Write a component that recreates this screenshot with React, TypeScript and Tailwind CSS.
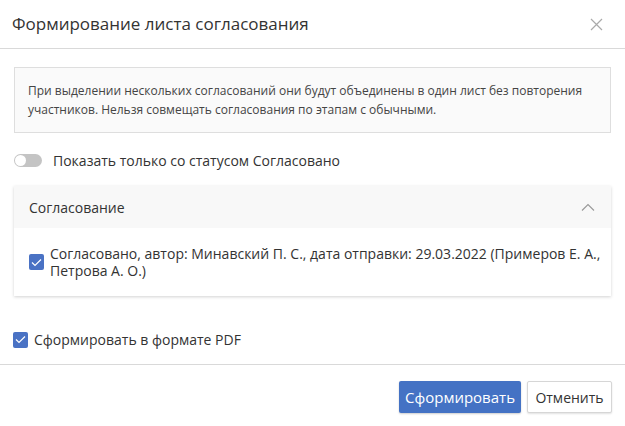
import React from "react";

export default function App() {
  return (
    <div className="w-[625px] h-[426px] bg-white text-[#333] flex flex-col" style={{ fontFamily: '"Open Sans", sans-serif' }}>
      <div className="h-[49px] flex items-center justify-between pl-[12px] pr-[22px] border-b border-[#d9d9d9]">
        <div className="text-[17px] text-[#333]">Формирование листа согласования</div>
        <svg width="13" height="13" viewBox="0 0 13 13" className="text-[#aaa]">
          <path d="M1 1L12 12M12 1L1 12" stroke="currentColor" strokeWidth="1.2" />
        </svg>
      </div>
      <div className="px-[14px] pt-[18px] flex flex-col">
        <div className="h-[66px] border border-[#dedede] bg-[#fafafa] px-[13px] flex flex-col justify-center text-[12px] leading-[19px] text-[#444]">
          <div>При выделении нескольких согласований они будут объединены в один лист без повторения</div>
          <div>участников. Нельзя совмещать согласования по этапам с обычными.</div>
        </div>
        <div className="mt-[20px] flex items-center gap-[11px] h-[14px]">
          <div className="w-[28px] h-[13px] rounded-full bg-[#c4c4c4] relative">
            <div className="absolute left-[1px] top-[1px] w-[11px] h-[11px] rounded-full bg-white" />
          </div>
          <span className="text-[14px]">Показать только со статусом Согласовано</span>
        </div>
        <div className="mt-[19px] shadow-[0_1px_3px_rgba(0,0,0,0.18)] bg-white">
          <div className="h-[42px] bg-[#f8f8f8] flex items-center justify-between pl-[15px] pr-[16px]">
            <span className="text-[14px]">Согласование</span>
            <svg width="14" height="8" viewBox="0 0 14 8" className="text-[#999]">
              <path d="M1 7.5L7 1.5L13 7.5" fill="none" stroke="currentColor" strokeWidth="1.1" />
            </svg>
          </div>
          <div className="pl-[15px] pr-[8px] pt-[17px] pb-[17px] flex items-center gap-[6px]">
            <Check />
            <div className="text-[14px] leading-[17px]">
              <div>Согласовано, автор: Минавский П. С., дата отправки: 29.03.2022 (Примеров Е. А.,</div>
              <div>Петрова А. О.)</div>
            </div>
          </div>
        </div>
      </div>
      <div className="mt-[33px] pl-[13px] flex items-center gap-[6px]">
        <Check />
        <span className="text-[14px]">Сформировать в формате PDF</span>
      </div>
      <div className="mt-[14px] border-t border-[#d9d9d9] flex justify-end gap-[6px] pr-[13px] pt-[16px]">
        <button className="h-[32px] w-[122px] rounded-[2px] bg-[#4472c4] text-white text-[15px] shadow-[0_1px_2px_rgba(0,0,0,0.2)]">Сформировать</button>
        <button className="h-[32px] w-[85px] rounded-[2px] bg-white border border-[#d6d6d6] text-[#333] text-[14px] shadow-[0_1px_2px_rgba(0,0,0,0.12)]">Отменить</button>
      </div>
    </div>
  );
}

function Check() {
  return (
    <div className="w-[15px] h-[16px] rounded-[2px] bg-[#4a72c4] flex items-center justify-center shrink-0">
      <svg width="11" height="9" viewBox="0 0 11 9">
        <path d="M1 4.5L4 7.5L10 1.5" fill="none" stroke="white" strokeWidth="1.2" />
      </svg>
    </div>
  );
}
